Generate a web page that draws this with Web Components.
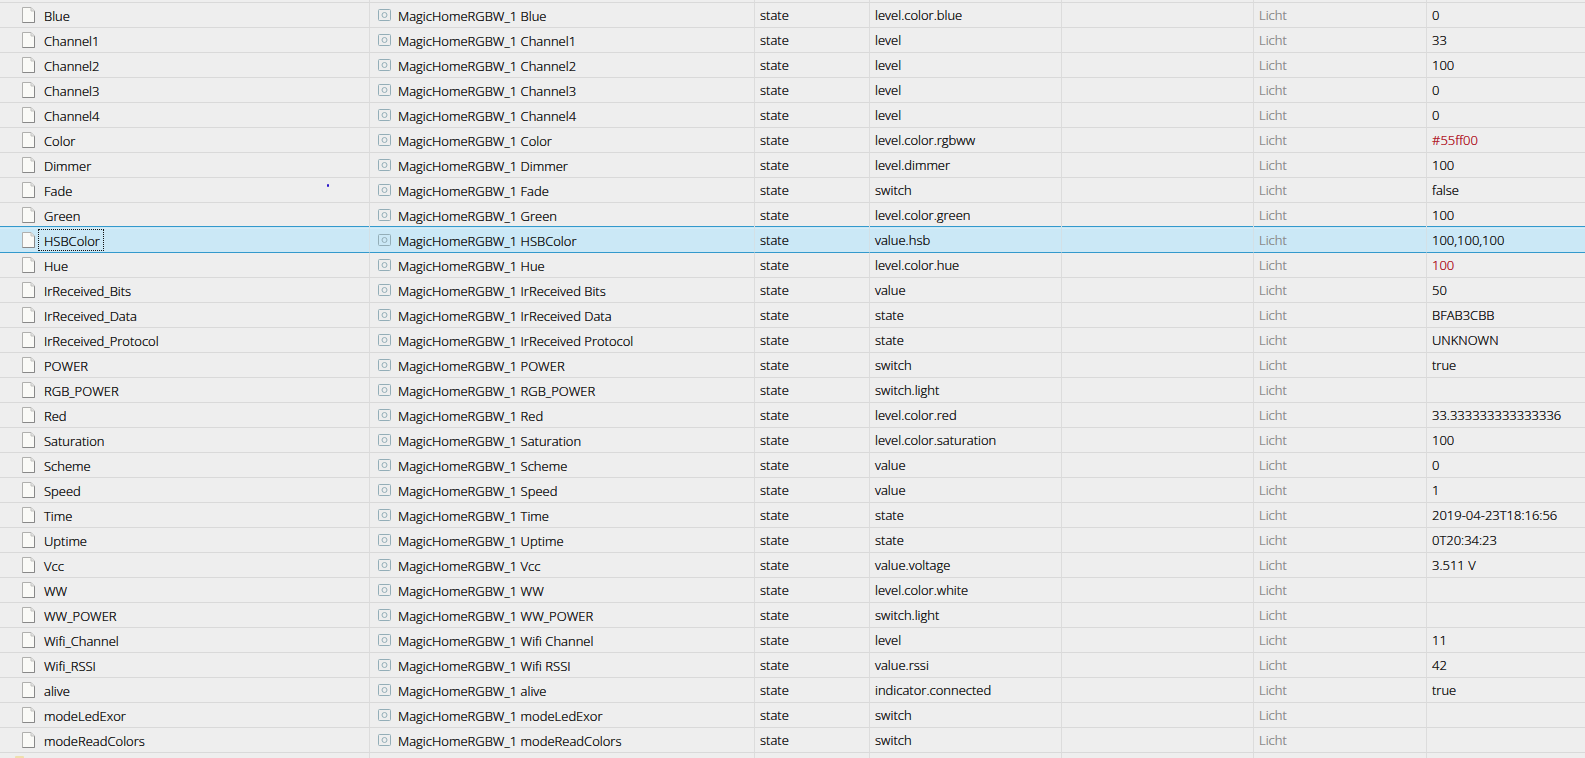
<!DOCTYPE html>
<html lang="en">
<head>
<meta charset="utf-8">
<title>Objects</title>
<style>
html, body { margin: 0; height: 100%; background: #eee; }
body { overflow: hidden; font-family: "Open Sans", "Noto Sans", sans-serif; font-size: 13px; font-weight: 350; color: #111; text-shadow: 0 0 0 currentColor; }
</style>
</head>
<body>
<object-tree></object-tree>

<template id="page-icon">
<style>
:host { display: block; flex: none; width: 13px; height: 16px; }
svg { display: block; }
</style>
<svg width="13" height="16" viewBox="0 0 13 16" aria-hidden="true">
<path d="M.5 .5H9L12.500 4V15.500H.5Z" fill="#fafaf7" stroke="#b0b0ae"/>
<path d="M.5 15.500H12.500V4" fill="none" stroke="#888"/>
<path d="M9 .5V4H12.500" fill="#e4e4e2" stroke="#c2c2c0"/>
</svg>
</template>

<template id="state-icon">
<style>
:host { display: block; flex: none; width: 13px; height: 12px; }
svg { display: block; }
</style>
<svg width="13" height="12" viewBox="0 0 13 12" fill="none" stroke="#93aeb8" aria-hidden="true">
<rect x=".5" y=".5" width="12" height="11" rx="1"/>
<circle cx="6.500" cy="6" r="2.500"/>
</svg>
</template>

<template id="object-tree">
<style>
:host { display: block; height: 100vh; overflow: hidden; }
table { width: 100%; table-layout: fixed; border-collapse: separate; border-spacing: 0; }
.name { width: 370px; } .title { width: 385px; } .type { width: 115px; }
.role { width: 192px; } .room { width: 192px; } .func { width: 173px; }
td { height: 24px; padding: 0 0 0 5px; line-height: 24px; white-space: nowrap; overflow: hidden;
  border-right: 1px solid #dcdcdc; border-bottom: 1px solid #d9d9d9; }
td:last-child { border-right: 0; }
td:first-child { padding-left: 22px; }
td:nth-child(2) { padding-left: 8px; }
.edge td { height: 2px; line-height: 0; }
.tail td { height: 24px; vertical-align: top; border-bottom: 0; }
.cell { display: flex; align-items: center; height: 24px; }
.cell state-icon { margin-right: 3px; }
.label { box-sizing: border-box; height: 22px; line-height: 24px; margin-left: 3px; padding: 0 4px 0 6px; }
td:nth-child(2) .label { margin-left: 4px; padding-left: 0; }
.group { color: #888; }
.changed { color: #b01526; }
tr[aria-selected="true"] td { background: #cbe8f6; border-right-color: #d3e0e6; border-bottom-color: #3399cc; box-shadow: inset 0 1px #d5edf8; }
.before td { box-shadow: inset 0 -1px #3399cc; border-bottom-color: #cbe8f6; }
tr[aria-selected="true"] td:first-child .label { outline: 1px dotted #111; outline-offset: -1px; }
.mark { align-self: flex-start; margin: 6px 40px 0 auto; width: 2px; height: 3px; border-radius: 1px; background: #2a16c9; }
.folder { display: block; width: 9px; height: 6px; margin: 3px 0 0 -7px; border-radius: 1px; background: #efdfae; }
</style>
<table aria-label="Objects">
<colgroup><col class="name"><col class="title"><col class="type"><col class="role"><col class="room"><col class="func"><col></colgroup>
<tbody></tbody>
</table>
</template>

<script>
const stamp = (host, id) => host.attachShadow({ mode: "open" })
  .append(document.getElementById(id).content.cloneNode(true));

customElements.define("page-icon", class extends HTMLElement {
  constructor() { super(); stamp(this, "page-icon"); }
});
customElements.define("state-icon", class extends HTMLElement {
  constructor() { super(); stamp(this, "state-icon"); }
});

/* name, role, value, title (when it differs from the name) */
const STATES = [
  ["Blue", "level.color.blue", "0"],
  ["Channel1", "level", "33"],
  ["Channel2", "level", "100"],
  ["Channel3", "level", "0"],
  ["Channel4", "level", "0"],
  ["Color", "level.color.rgbww", "#55ff00"],
  ["Dimmer", "level.dimmer", "100"],
  ["Fade", "switch", "false"],
  ["Green", "level.color.green", "100"],
  ["HSBColor", "value.hsb", "100,100,100"],
  ["Hue", "level.color.hue", "100"],
  ["IrReceived_Bits", "value", "50", "IrReceived Bits"],
  ["IrReceived_Data", "state", "BFAB3CBB", "IrReceived Data"],
  ["IrReceived_Protocol", "state", "UNKNOWN", "IrReceived Protocol"],
  ["POWER", "switch", "true"],
  ["RGB_POWER", "switch.light", ""],
  ["Red", "level.color.red", "33.333333333333336"],
  ["Saturation", "level.color.saturation", "100"],
  ["Scheme", "value", "0"],
  ["Speed", "value", "1"],
  ["Time", "state", "2019-04-23T18:16:56"],
  ["Uptime", "state", "0T20:34:23"],
  ["Vcc", "value.voltage", "3.511 V"],
  ["WW", "level.color.white", ""],
  ["WW_POWER", "switch.light", ""],
  ["Wifi_Channel", "level", "11", "Wifi Channel"],
  ["Wifi_RSSI", "value.rssi", "42", "Wifi RSSI"],
  ["alive", "indicator.connected", "true"],
  ["modeLedExor", "switch", ""],
  ["modeReadColors", "switch", ""]
];
const SELECTED = "HSBColor";
const CHANGED = ["Color", "Hue"];

customElements.define("object-tree", class extends HTMLElement {
  constructor() {
    super();
    stamp(this, "object-tree");
    const blank = "<td></td>".repeat(6);
    const rows = STATES.map(([name, role, value, title], i) => {
      const next = STATES[i + 1];
      const attrs = name === SELECTED ? ' aria-selected="true"'
        : next && next[0] === SELECTED ? ' class="before"' : "";
      return `<tr${attrs}>
        <td><div class="cell"><page-icon></page-icon><span class="label">${name}</span>${name === "Fade" ? '<i class="mark"></i>' : ""}</div></td>
        <td><div class="cell"><state-icon></state-icon><span class="label">MagicHomeRGBW_1 ${title || name}</span></div></td>
        <td>state</td><td>${role}</td><td></td><td class="group">Licht</td>
        <td${CHANGED.includes(name) ? ' class="changed"' : ""}>${value}</td></tr>`;
    });
    this.shadowRoot.querySelector("tbody").innerHTML =
      `<tr class="edge"><td></td>${blank}</tr>${rows.join("")}<tr class="tail"><td><i class="folder"></i></td>${blank}</tr>`;
  }
});
</script>
</body>
</html>
